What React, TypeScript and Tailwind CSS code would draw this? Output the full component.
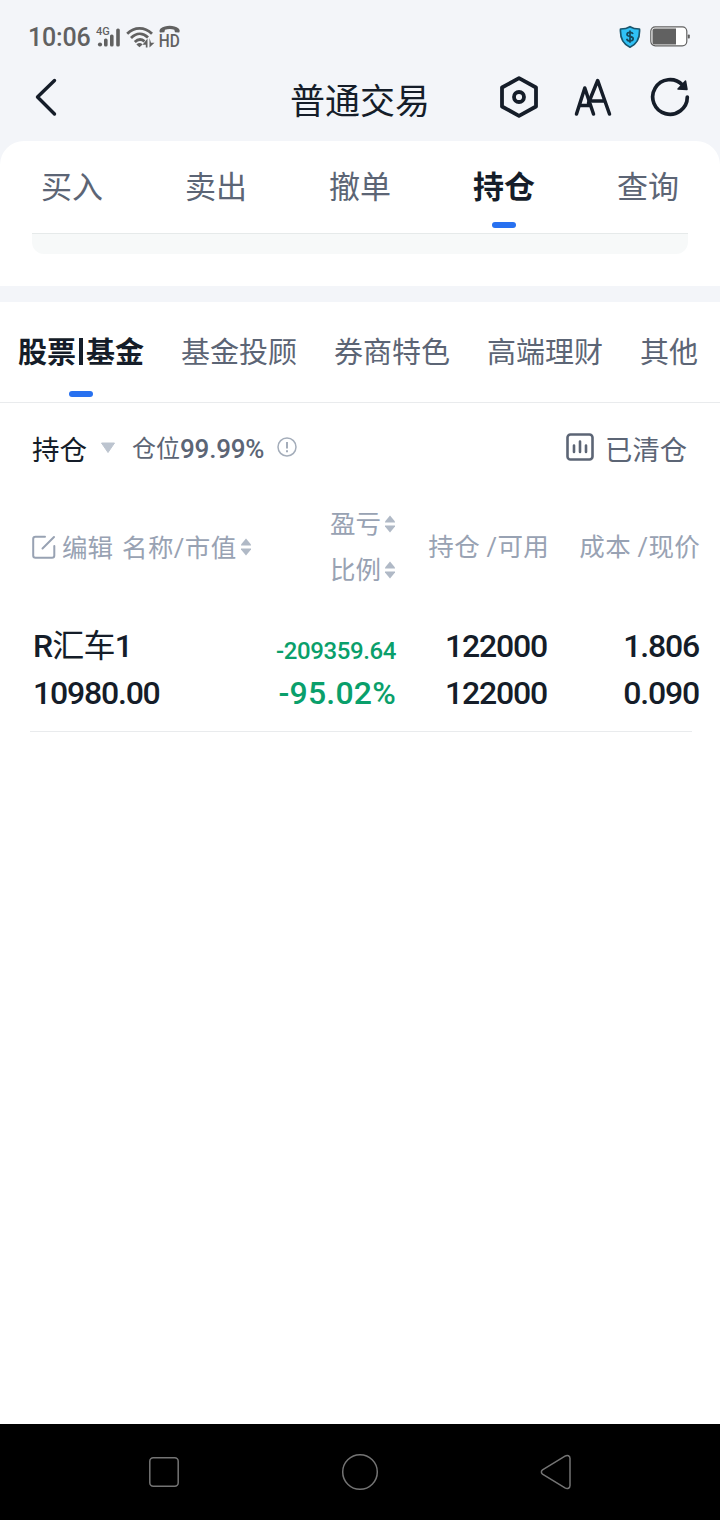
import React from 'react';

const MAIN_TABS = ['买入', '卖出', '撤单', '持仓', '查询'];
const ACTIVE_MAIN_TAB = '持仓';

const StatusBar: React.FC = () => (
  <div className="flex h-[74px] items-center pl-[28px] pr-[29px] text-[#616161]">
    <span className="mt-[2px] w-[68px] text-[25px] leading-8 font-medium tracking-[-0.2px]">10:06</span>
    {/* signal */}
    <svg width="26" height="26" viewBox="0 0 26 26" fill="currentColor">
      <text x="0" y="11" fontSize="11" fontWeight="500">4G</text>
      <circle cx="4" cy="20.5" r="2.1" />
      <rect x="8" y="14.5" width="3.6" height="8" rx="1.6" />
      <rect x="14" y="10.5" width="3.6" height="12" rx="1.6" />
      <rect x="20.2" y="4.500" width="3.6" height="18" rx="1.6" />
    </svg>
    {/* wifi */}
    <svg className="ml-[4px]" width="29" height="26" viewBox="0 0 29 26" fill="none" stroke="currentColor" strokeWidth="2.8">
      <path d="M1.2 9.8C8.5 2.6 18.5 2.6 26 9.8" />
      <path d="M5 14C10.500 8.600 17 8.600 22 13.600" />
      <path d="M8.800 18C12 14.800 15.500 14.800 18.500 17.300" />
      <path d="M10.400 20.500C12.500 18.600 14.700 18.600 16.600 20.500L13.500 23.200Z" fill="currentColor" stroke="none" />
      <path d="M21.500 14.500V23.500H19.800V20.800H16.500ZM23.500 14V23.500L28.500 18.800H25Z" fill="currentColor" stroke="none" />
    </svg>
    {/* HD call */}
    <svg className="ml-[4px] overflow-visible" width="22" height="26" viewBox="0 0 22 26" fill="currentColor">
      <path d="M1 8.500C.2 7.500.4 5.600 1.600 4.600C6.500.9 15 .9 19.600 4.600C20.800 5.600 21 7.500 20.200 8.500L16 8.300L15.300 5.800C12.500 4.800 9 4.800 6 5.800L5.300 8.300Z" />
      <text x="-0.300" y="23" fontSize="17.500" fontWeight="500" textLength="21" lengthAdjust="spacingAndGlyphs">HD</text>
    </svg>
    <svg className="ml-auto" width="22" height="24" viewBox="0 0 22 24">
      <path d="M11 1.700C13.500 3.300 16.500 4 20.500 4C21 12 19.500 18.500 11 22.200C2.500 18.500 1 12 1.500 4C5.500 4 8.500 3.300 11 1.700Z" fill="#2fc1f6" stroke="#1a566e" strokeWidth="1.700" strokeLinejoin="round" />
      <path d="M14 9C13.500 7.700 12.400 7.300 11 7.300C9.300 7.300 8 8 8 9.400C8 12.200 14.200 10.600 14.200 13.700C14.200 15.100 12.800 15.900 11 15.900C9.200 15.900 8 15.100 7.700 13.700M11 5.500V17.700" fill="none" stroke="#16485c" strokeWidth="1.700" />
    </svg>
    <svg className="ml-[9px]" width="41" height="22" viewBox="0 0 41 22">
      <rect x="0.800" y="0.800" width="36" height="19" rx="4.500" fill="#fff" stroke="#616161" strokeWidth="1.200" />
      <path d="M4.500 2.500H26V18.500H4.500C3 18.500 2.500 17.500 2.500 16.500V4.500C2.500 3.500 3 2.500 4.500 2.500Z" fill="#616161" />
      <rect x="37.800" y="8.500" width="2" height="4" rx="0.800" fill="#616161" />
    </svg>
  </div>
);

const Header: React.FC = () => (
  <div className="grid h-[67px] grid-cols-[1fr_auto_1fr] items-start text-[#151d29]">
    <svg className="ml-[34px]" width="24" height="46" viewBox="0 0 24 46" fill="none" stroke="currentColor" strokeWidth="3.400" strokeLinecap="round" strokeLinejoin="round">
      <path d="M20.500 6.500L3.500 23L20.500 40" />
    </svg>
    <h1 className="mt-[5px] text-[35px] leading-[48px]">普通交易</h1>
    <div className="mr-[30px] flex justify-end">
      <svg width="40" height="46" viewBox="0 0 40 46" fill="none" stroke="currentColor" strokeWidth="3.800" strokeLinejoin="round">
        <path d="M21 4.200L38 13.500V32.500L21 41.800L4 32.500V13.500Z" />
        <circle cx="21" cy="23" r="5" />
      </svg>
      <svg className="ml-[35px]" width="40" height="46" viewBox="0 0 40 46" fill="none" stroke="currentColor" strokeWidth="3.500" strokeLinecap="round" strokeLinejoin="round">
        <path d="M3.500 40L11.800 14L20.500 40M6.500 31.500H17" />
        <path d="M15.500 29L24.700 6.500L36.500 40M19 27H31.500" />
      </svg>
      <svg className="ml-[37px]" width="40" height="46" viewBox="0 0 40 46" fill="none" stroke="currentColor" strokeWidth="3.700" strokeLinecap="round">
        <path d="M37.300 23A17.300 17.300 0 1 1 32.500 11" />
        <path d="M35.500 7L37 15.500L28 15Z" fill="currentColor" strokeWidth="1.500" strokeLinejoin="round" />
      </svg>
    </div>
  </div>
);

const MainTabs: React.FC = () => (
  <div className="h-[145px] rounded-t-[24px] bg-white">
    <div className="grid h-[92px] grid-cols-5">
      {MAIN_TABS.map(tab => (
        <div key={tab} className="flex flex-col items-center pt-[26px]">
          <span className={`text-[31px] leading-[42px] ${tab === ACTIVE_MAIN_TAB ? 'font-bold text-[#151d29]' : 'text-[#5c6575]'}`}>
            {tab}
          </span>
          {tab === ACTIVE_MAIN_TAB && <i className="mt-[13px] h-[6px] w-6 rounded-full bg-[#2871f0]" />}
        </div>
      ))}
    </div>
    <div className="mx-8 h-[21px] rounded-b-[12px] border-t border-[#e6eaea] bg-[#f7f9f9]" />
  </div>
);

const AssetTabs: React.FC = () => (
  <div className="flex h-[101px] items-start justify-between border-b border-[#e9ebed] pt-[30px] pl-[18px] pr-[22px] text-[29px] leading-[42px] text-[#5c6575]">
    <div className="flex flex-col items-center font-bold text-[#151d29]">
      <span className="flex items-center">
        股票<i className="mx-[3px] mb-[4px] h-[27px] w-[4px] bg-[#151d29]" />基金
      </span>
      <i className="mt-[17px] h-[6px] w-6 rounded-full bg-[#2871f0]" />
    </div>
    <span>基金投顾</span>
    <span>券商特色</span>
    <span>高端理财</span>
    <span>其他</span>
  </div>
);

const Toolbar: React.FC = () => (
  <div className="flex h-[92px] items-center pl-8 pr-[33px] text-[27px] leading-[40px] text-[#5c6575]">
    <span className="mt-[4px] text-[27.500px] text-[#151d29]">持仓</span>
    <svg className="ml-[13px] -mt-[2px]" width="16" height="12" viewBox="0 0 16 12">
      <path d="M1.500 1H14.500L8 10.500Z" fill="#bcc4cf" stroke="#bcc4cf" strokeLinejoin="round" />
    </svg>
    <span className="ml-[16px] flex text-[24px]">
      仓位<span className="text-[26px] font-medium tracking-[-0.200px]">99.99%</span>
    </span>
    <svg className="ml-[12px] -mt-[4px]" width="22" height="22" viewBox="0 0 22 22" fill="none" stroke="#a4adba">
      <circle cx="11" cy="11" r="9" strokeWidth="1.500" />
      <path d="M11 6V12.500M11 14.200V16.200" strokeWidth="2" />
    </svg>
    <svg className="ml-auto -mt-[4px]" width="30" height="30" viewBox="0 0 30 30" fill="none" stroke="currentColor" strokeWidth="2.600" strokeLinecap="round">
      <rect x="2.500" y="2.500" width="25" height="25" rx="3" />
      <path d="M9 13.500V20M15 9.500V20M21 13.500V20" />
    </svg>
    <span className="ml-[10px] mt-[4px] text-[27.300px]">已清仓</span>
  </div>
);

const SortIcon: React.FC = () => (
  <svg className="shrink-0" width="12" height="18" viewBox="0 0 12 18" fill="#b0b9c6">
    <path d="M6 0.500L11 6.500V7.500H1V6.500Z" />
    <path d="M6 17.500L11 11.500V10.500H1V11.500Z" />
  </svg>
);

const TableHead: React.FC = () => (
  <div className="mb-6 grid h-[104px] grid-cols-[200px_164px_152px_152px] items-center pl-8 text-[25.500px] leading-[46px] text-[#98a2b3]">
    <div className="flex items-center whitespace-nowrap">
      <svg className="mr-[6px] shrink-0" width="24" height="24" viewBox="0 0 24 24" fill="none" stroke="currentColor" strokeWidth="2" strokeLinecap="round">
        <path d="M13 1.800H3.500C2.200 1.800 1.200 2.500 1.200 4V20.500C1.200 22 2.200 22.800 3.500 22.800H20C21.500 22.800 22.300 22 22.300 20.500V11M10.500 13.500L22 2" />
      </svg>
      <span className="mt-[2px]">编辑</span>
      <span className="ml-[9px] mr-[3px] mt-[2px] tracking-[0.400px]">名称/市值</span>
      <SortIcon />
    </div>
    <div className="flex flex-col items-end">
      <span className="flex items-center gap-[3px]">盈亏<SortIcon /></span>
      <span className="flex items-center gap-[3px]">比例<SortIcon /></span>
    </div>
    <span className="mr-[-1px] text-right tracking-[0.300px] whitespace-pre">持仓 /可用</span>
    <span className="text-right tracking-[0.300px] whitespace-pre">成本 /现价</span>
  </div>
);

const HoldingRow: React.FC = () => (
  <div className="h-[109px]">
    <div className="grid h-[108px] grid-cols-[200px_164px_152px_152px] pl-8 text-[32px] leading-[47px] font-medium tracking-[-1.200px] text-[#151d29]">
      <div className="pl-px">
        <div className="tracking-[-0.800px]">R<span className="font-normal">汇车</span>1</div>
        <div>10980.00</div>
      </div>
      <div className="text-right text-[#0a9f6b]">
        <div className="h-[47px] pt-[5px] text-[24px] tracking-[-0.400px]">-209359.64</div>
        <div className="tracking-[0.200px]">-95.02%</div>
      </div>
      <div className="pr-px text-right">
        <div>122000</div>
        <div>122000</div>
      </div>
      <div className="pr-px text-right">
        <div>1.806</div>
        <div>0.090</div>
      </div>
    </div>
    <div className="ml-[30px] mr-7 h-px bg-[#e9ebed]" />
  </div>
);

const NavBar: React.FC = () => (
  <div className="flex h-24 items-center justify-between bg-black pl-[148px] pr-[147px]">
    <svg width="32" height="40" viewBox="0 0 32 40" fill="none" stroke="#747474" strokeWidth="1.500">
      <rect x="1.800" y="5.800" width="28.400" height="28.400" rx="3.500" />
    </svg>
    <svg width="40" height="40" viewBox="0 0 40 40" fill="none" stroke="#747474" strokeWidth="1.500">
      <circle cx="20" cy="20" r="17.300" />
    </svg>
    <svg width="34" height="40" viewBox="0 0 34 40" fill="none" stroke="#747474" strokeWidth="1.500">
      <path d="M3.500 17.800L26 4.200C28.500 2.800 31 3.700 31 6.500V33.500C31 36.300 28.500 37.200 26 35.800L3.500 22.200C2 21 2 19 3.500 17.800Z" />
    </svg>
  </div>
);

export default function App() {
  return (
    <div className="flex h-[1520px] w-[720px] flex-col overflow-hidden bg-[#f3f5f9] font-[Roboto,'Noto_Sans_CJK_SC',sans-serif]">
      <StatusBar />
      <Header />
      <MainTabs />
      <div className="mt-4 flex-1 bg-white">
        <AssetTabs />
        <Toolbar />
        <TableHead />
        <HoldingRow />
      </div>
      <NavBar />
    </div>
  );
}
